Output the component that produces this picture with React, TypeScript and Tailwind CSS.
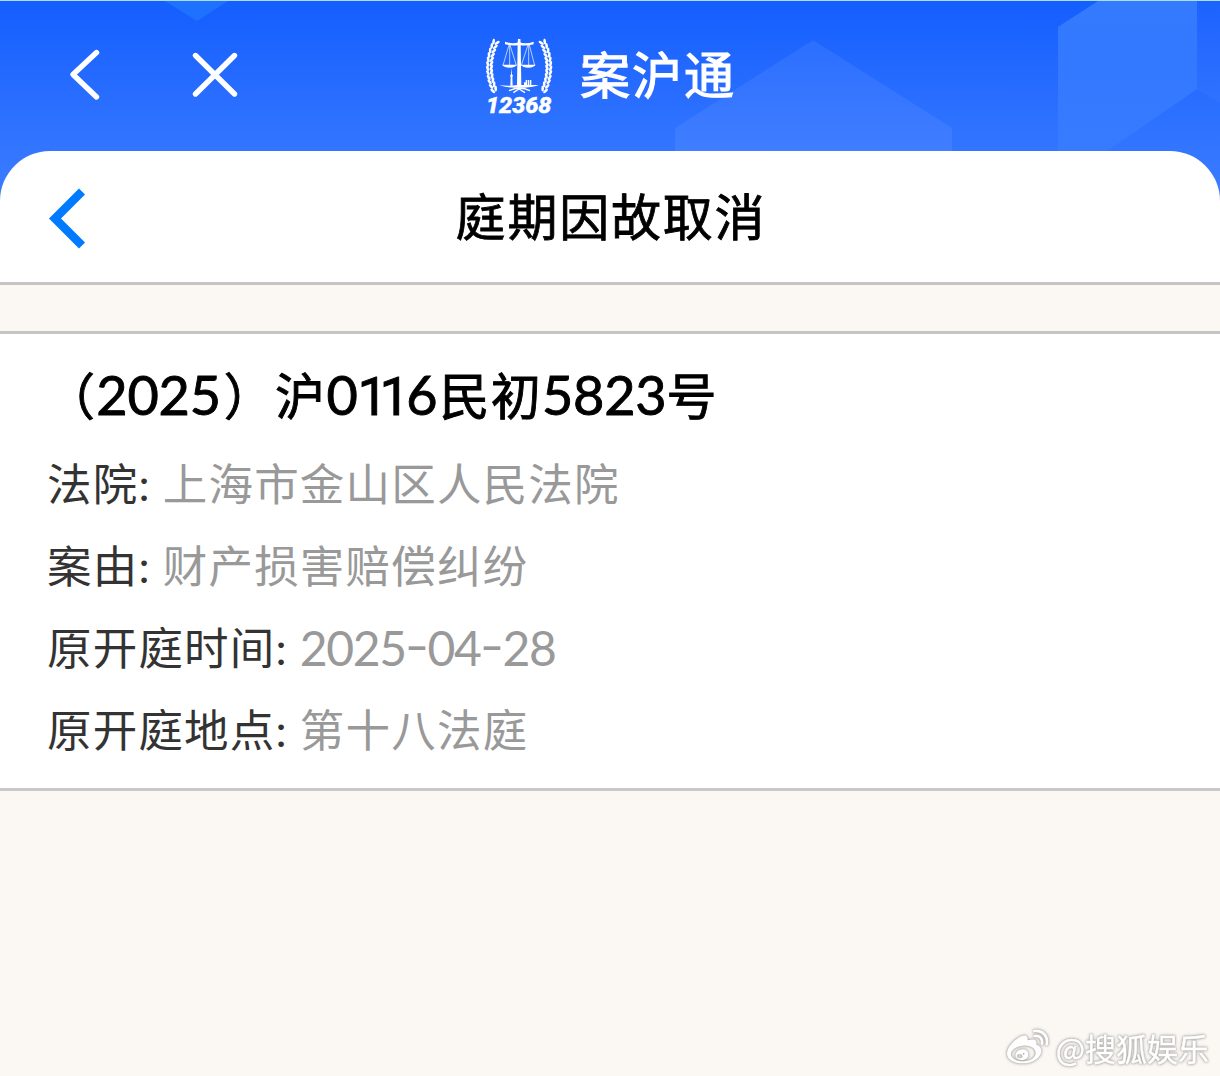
import type { ReactNode } from "react";

type row = {
    label: string,
    value: ReactNode
}

const rows: row[] = [
    { label: '法院', value: '上海市金山区人民法院' },
    { label: '案由', value: '财产损害赔偿纠纷' },
    {
        label: '原开庭时间',
        value: (
            <span className="text-[48px] tracking-[-1.400px]">
                2025<Dash />04<Dash />28
            </span>
        )
    },
    { label: '原开庭地点', value: '第十八法庭' },
]

// y of every leaf pair of the wreath
const leaves = [54, 67, 80, 93, 106, 119, 132, 145, 158, 171, 184, 197]

function Dash() {
    return <span className="inline-block w-[22px] text-center tracking-normal"><span className="inline-block scale-x-[1.4] -translate-y-[3px]">-</span></span>
}

function Wreath() {
    return (
        <g>
            {leaves.map((y) => {
                const t = (y - 126) / 82
                const x = 58 + 21 * t * t
                const tilt = t * 34
                return (
                    <g key={y} transform={`translate(${x} ${y}) rotate(${-tilt})`}>
                        <ellipse cx="-5" cy="-2" rx="4" ry="9" transform="rotate(-20 -5 -2)" />
                        <ellipse cx="6" cy="-4" rx="4" ry="9" transform="rotate(28 6 -4)" />
                    </g>
                )
            })}
        </g>
    )
}

function Emblem() {
    return (
        <svg className="w-[100px] h-[100px]" viewBox="0 0 300 300" fill="white">
            <Wreath />
            <g transform="translate(295 0) scale(-1 1)"><Wreath /></g>
            <path d="M144 42h7l1 12h-9zM143 54h9l2 129h-13z" />
            <path d="M105 50q20 8 42 2q22 6 44-2v8q-22 6-44 2q-22 4-42-2z" />
            <path d="M117 60L99 121M119 60v60M120 60l19 61M174 60l-20 61M176 60v60M178 60l16 61" fill="none" stroke="white" strokeWidth="2" />
            <path d="M96 119h45q-6 9-22 9t-23-9zM152 119h45q-6 9-22 9t-23-9z" />
            <path d="M124 128l2 20l3 4l-2 4l1 26h-7l1-26l-2-4l3-4z" />
            <path d="M162 172h5v-7h5v15h-10zM174 165h4v15h-4zM180 165h4v15h-4z" />
            <path d="M88 180q28 4 54 0h64q-15 7-42 8h-30q-30-1-46-8z" />
            <path d="M117 197q18-8 30-8q18 0 33 8M130 203l17-11l18 11" fill="none" stroke="white" strokeWidth="4" />
            <text x="48" y="265" fontSize="64" fontWeight="800" fontStyle="italic" textLength="196" lengthAdjust="spacingAndGlyphs" fontFamily="Roboto, sans-serif" stroke="white" strokeWidth="1.5">12368</text>
        </svg>
    )
}

function HeaderBackdrop() {
    return (
        <svg className="absolute inset-0 w-full h-[201px]" viewBox="0 0 1220 201">
            <defs>
                <linearGradient id="fade" x1="0" y1="0" x2="0" y2="150" gradientUnits="userSpaceOnUse">
                    <stop offset="0" stopColor="#4d92ff" stopOpacity=".55" />
                    <stop offset="1" stopColor="#4d92ff" stopOpacity=".2" />
                </linearGradient>
            </defs>
            <path d="M165 0h63l-31 20z" fill="#1f72ff" />
            <path d="M675 127L813 39L952 127v73H675z" fill="white" fillOpacity=".065" />
            <path d="M1058 26L1098 0h99v88l-90 62h-49z" fill="url(#fade)" />
            <path d="M1197 0h23v102l-23-14z" fill="white" fillOpacity=".03" />
        </svg>
    )
}

function Watermark() {
    return (
        <div className="flex items-center justify-end mt-auto pr-[11px] pb-[9px] text-white [filter:drop-shadow(0_0_1px_#9c9a97)_drop-shadow(0_0_1.5px_#c9c6c2)]">
            <svg className="w-[44px] h-[38px] mr-[6px]" viewBox="0 0 132 114">
                <path fill="white" fillRule="evenodd" d="M47 21C28 29 3 53 3 74c0 17 21 29 46 29c32 0 57-18 57-38c0-11-9-17-15-18c3-13-5-20-26-13c1-9-2-19-18-13zM50 50c22-2 39 8 39 22c0 13-15 24-35 25c-22 1-38-8-39-21c0-13 14-24 35-26z" />
                <path fill="white" d="M48 61c-15 2-23 14-18 24c6 11 26 11 34 1c9-12-1-27-16-25zm-7 15a6 6 0 1 1 0 11a6 6 0 1 1 0-11zm12-4a2.500 2.500 0 1 1 0 5a2.500 2.500 0 1 1 0-5z" fillRule="evenodd" />
                <path d="M86 21c15-2 24 8 22 23M85 6c25-4 42 15 37 40" fill="none" stroke="white" strokeWidth="8" strokeLinecap="round" />
            </svg>
            <span className="font-['Noto_Sans_CJK_SC',sans-serif] text-[31px] leading-[38px] [-webkit-text-stroke:.4px_white]">@搜狐娱乐</span>
        </div>
    )
}

export default function App() {
    return (
        <main className="w-[1220px] h-[1076px] overflow-hidden flex flex-col bg-[#fbf8f3] font-[Lato,'Noto_Sans_CJK_SC',sans-serif]">
            <header className="relative h-[282px] shrink-0 bg-linear-to-b from-[#145eff] to-[#3a7bff] to-[190px] border-t border-[#a9def5] flex flex-col">
                <HeaderBackdrop />
                <div className="relative h-[150px] shrink-0 flex items-start">
                    <svg className="w-[260px] h-[150px]" viewBox="0 1 260 150" fill="none" stroke="white" strokeWidth="5.4" strokeLinecap="round" strokeLinejoin="round">
                        <path d="M96.500 52.500L73 74.500L96.500 97M195.500 55.500L234.500 94M234.500 55.500L195.500 94" />
                    </svg>
                    <div className="flex ml-[210px] pt-[24px]">
                        <Emblem />
                        <h1 className="ml-[10px] mt-[14px] text-white text-[50px] leading-[72px] tracking-[2px] [-webkit-text-stroke:1.2px_white]">案沪通</h1>
                    </div>
                </div>
                <div className="relative grow bg-white rounded-t-[50px] flex items-center justify-center">
                    <svg className="absolute left-[48px] top-[37px] w-[38px] h-[61px]" viewBox="0 0 38 61" fill="none" stroke="#007aff" strokeWidth="8.500">
                        <path d="M34 3.500L7 30.500L34 57.500" />
                    </svg>
                    <h2 className="ml-[2px] text-black text-[50px] leading-[72px] tracking-[1.800px] [-webkit-text-stroke:.8px_black]">庭期因故取消</h2>
                </div>
            </header>

            <div className="h-[52px] shrink-0 border-y-3 border-[#c5c5c5]"></div>

            <section className="h-[457px] shrink-0 bg-white border-b-3 border-[#c8c8c8] px-[47px] pt-[24px]">
                <h3 className="-ml-[2px] text-black text-[50px] leading-[74px] whitespace-nowrap tracking-[1.300px] [-webkit-text-stroke:.9px_black]">
                    （<span className="text-[54px] tracking-[-.2px]">2025</span><span className="ml-[3px]">）</span>沪<span className="text-[54px] tracking-[-.2px]">0<span className="font-[Roboto] tracking-[-8.500px]">11</span><span className="ml-[5px]">6</span></span><span className="ml-[2px]">民初</span><span className="text-[54px] tracking-[-.2px]">5823</span>号
                </h3>
                <div className="mt-[9px] text-[44.500px]">
                    {
                        rows.map((item) => (
                            <div key={item.label} className="h-[82px] leading-[82px] flex items-center whitespace-nowrap tracking-[1.200px]">
                                <span className="text-[#333333]">{item.label}:</span>
                                <span className="ml-[12px] text-[#999999]">{item.value}</span>
                            </div>
                        ))
                    }
                </div>
            </section>

            <Watermark />
        </main>
    )
}
